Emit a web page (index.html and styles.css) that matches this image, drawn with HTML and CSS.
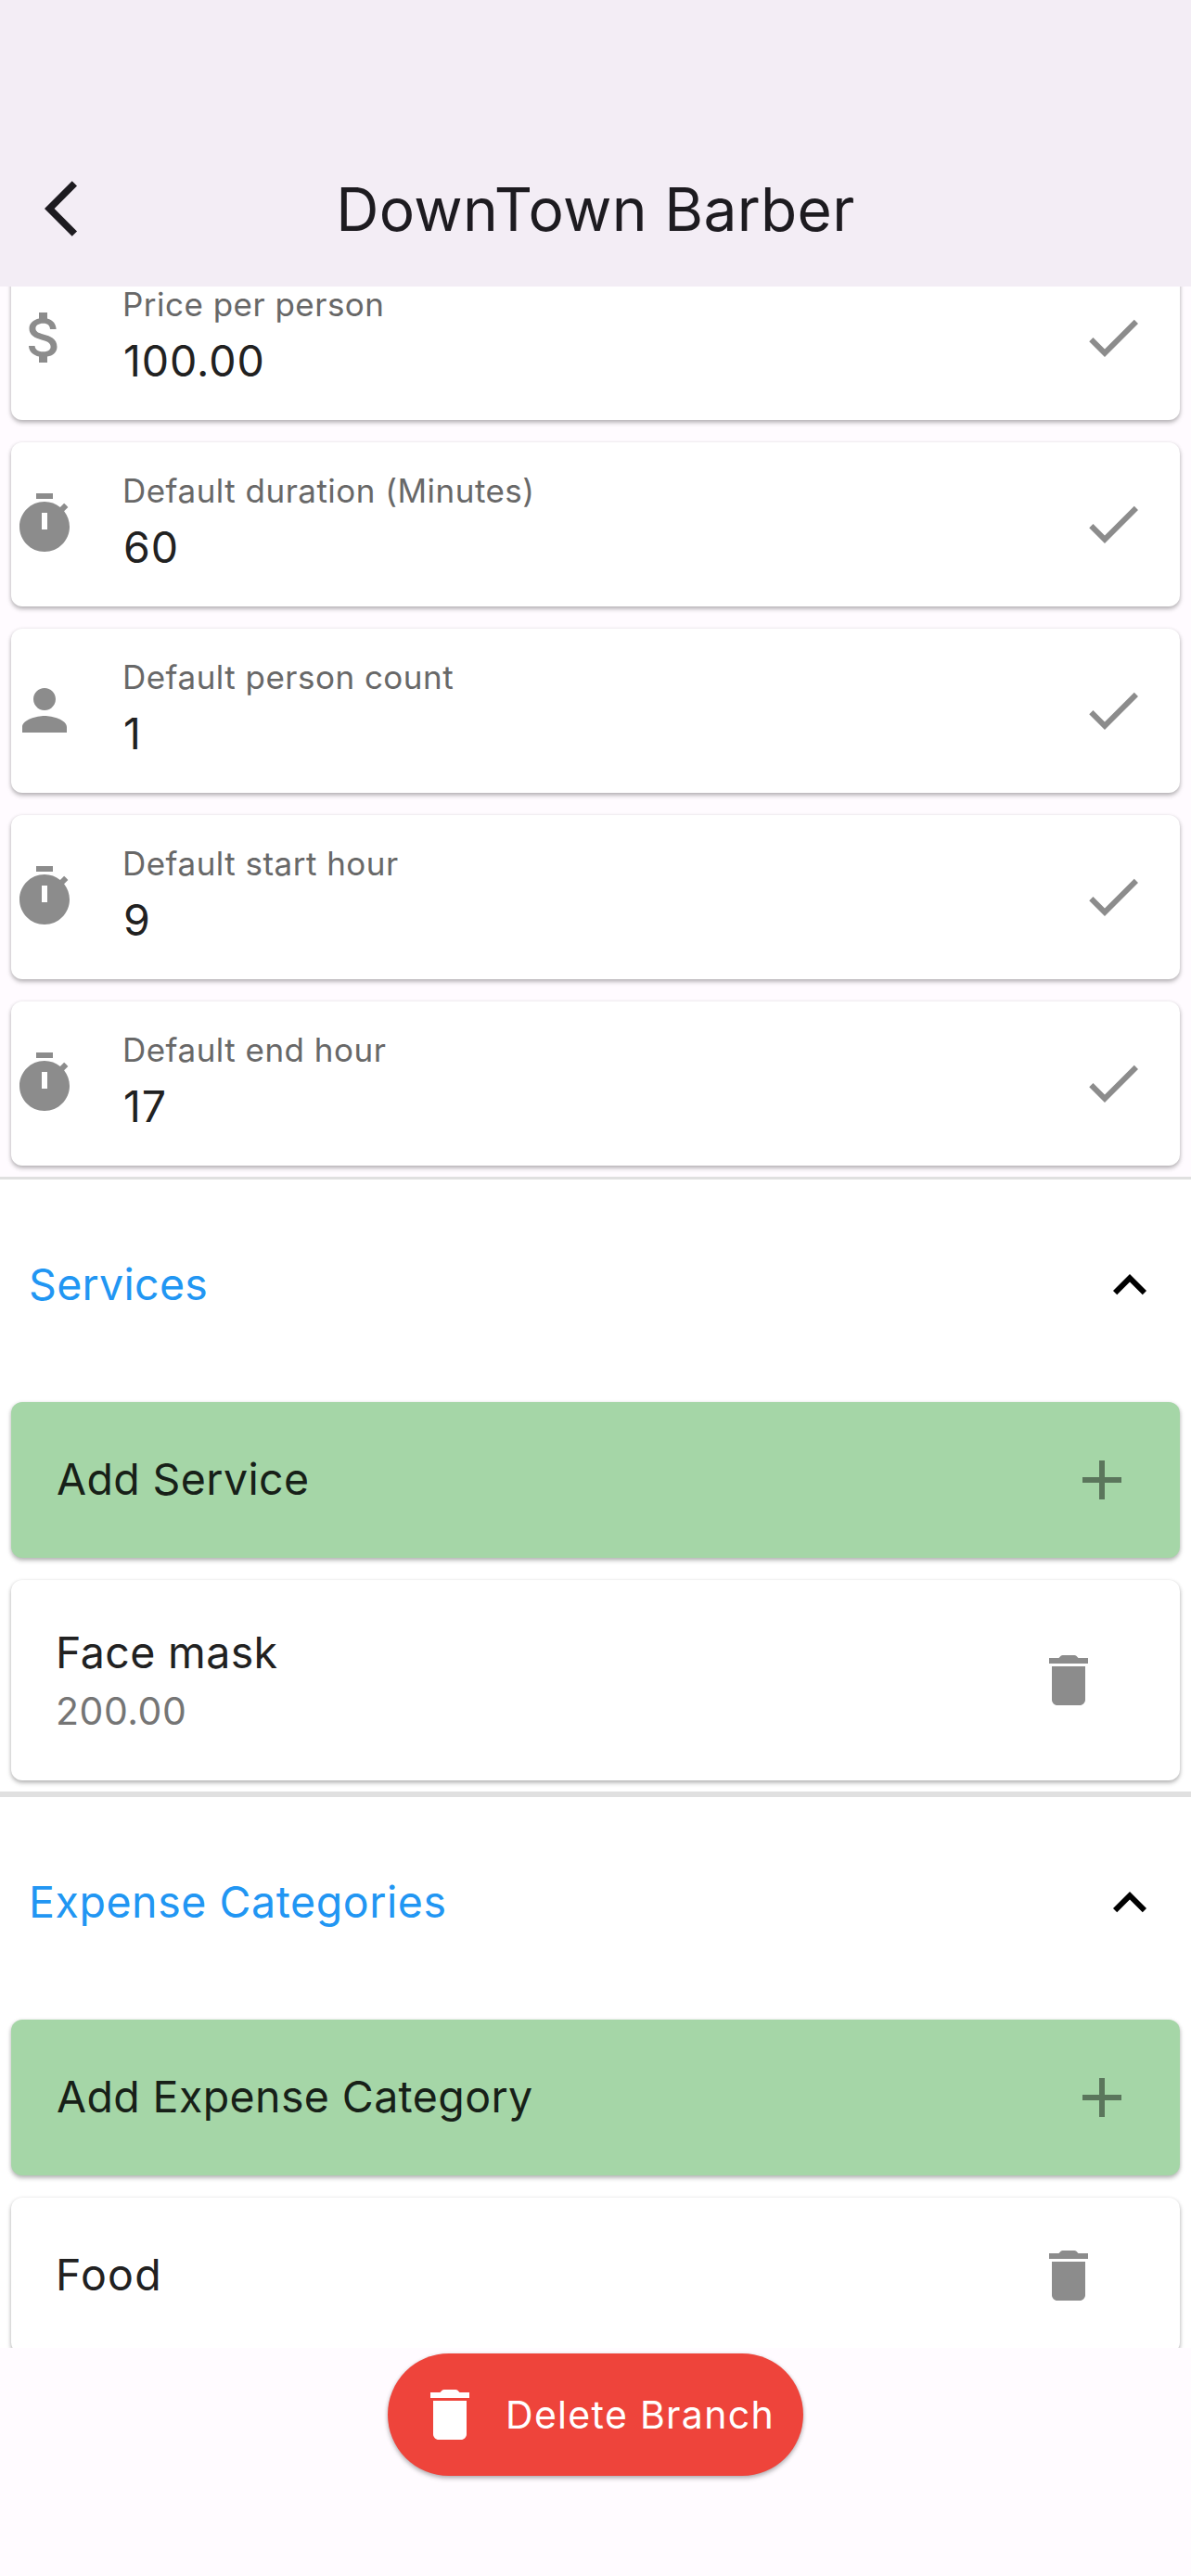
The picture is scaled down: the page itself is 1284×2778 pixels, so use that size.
FILE: index.html
```html
<!DOCTYPE html>
<html lang="en">
<head>
<meta charset="utf-8">
<title>DownTown Barber</title>
<link rel="stylesheet" href="styles.css">
</head>
<body>
<svg class="symbols" aria-hidden="true">
  <symbol id="dollar" viewBox="0 0 24 24"><path d="M11.8 10.9c-2.27-.59-3-1.2-3-2.15 0-1.09 1.01-1.85 2.7-1.85 1.78 0 2.44.85 2.5 2.1h2.21c-.07-1.72-1.12-3.3-3.21-3.81V3h-3v2.16c-1.94.42-3.5 1.68-3.5 3.61 0 2.31 1.91 3.46 4.7 4.13 2.5.6 3 1.48 3 2.41 0 .69-.49 1.79-2.7 1.79-2.06 0-2.87-.92-2.98-2.1h-2.2c.12 2.19 1.76 3.42 3.68 3.83V21h3v-2.15c1.95-.37 3.5-1.5 3.5-3.55 0-2.84-2.43-3.81-4.7-4.4z"/></symbol>
  <symbol id="timer" viewBox="0 0 24 24"><path fill-rule="evenodd" d="M9 1h6v2H9zM19.03 7.39l1.42-1.42c-.43-.51-.9-.99-1.41-1.41l-1.42 1.42C16.07 4.74 14.12 4 12 4c-4.97 0-9 4.03-9 9s4.02 9 9 9 9-4.03 9-9c0-2.12-.74-4.07-1.97-5.61zM13 14h-2V8h2v6z"/></symbol>
  <symbol id="person" viewBox="0 0 24 24"><path d="M12 12c2.21 0 4-1.79 4-4s-1.79-4-4-4-4 1.79-4 4 1.79 4 4 4zm0 2c-2.67 0-8 1.34-8 4v2h16v-2c0-2.66-5.33-4-8-4z"/></symbol>
  <symbol id="check" viewBox="0 0 24 24"><path d="M9 16.17L4.83 12l-1.42 1.41L9 19 21 7l-1.41-1.41z"/></symbol>
  <symbol id="chevron" viewBox="0 0 24 24"><path d="M12 8l-6 6 1.41 1.41L12 10.83l4.59 4.58L18 14z"/></symbol>
  <symbol id="plus" viewBox="0 0 24 24"><path d="M19 13h-6v6h-2v-6H5v-2h6V5h2v6h6v2z"/></symbol>
  <symbol id="trash" viewBox="0 0 24 24"><path d="M6 19c0 1.1.9 2 2 2h8c1.1 0 2-.9 2-2V7H6v12zM19 4h-3.5l-.71-.71c-.18-.18-.44-.29-.7-.29H9.91c-.26 0-.52.11-.7.29L8.5 4H5v2h14V4z"/></symbol>
  <symbol id="back" viewBox="0 0 24 24"><path d="M11.67 3.87L9.9 2.1 0 12l9.9 9.9 1.77-1.77L3.54 12z"/></symbol>
</svg>

<header class="appbar">
  <svg class="icon appbar-back"><use href="#back"/></svg>
  <h1 class="appbar-title">DownTown Barber</h1>
</header>

<main class="scroll">
  <section class="fields">
    <div class="card field">
      <svg class="icon"><use href="#dollar"/></svg>
      <div class="field-text"><span class="field-label">Price per person</span><span class="field-value">100.00</span></div>
      <svg class="icon"><use href="#check"/></svg>
    </div>
    <div class="card field">
      <svg class="icon"><use href="#timer"/></svg>
      <div class="field-text"><span class="field-label">Default duration (Minutes)</span><span class="field-value">60</span></div>
      <svg class="icon"><use href="#check"/></svg>
    </div>
    <div class="card field">
      <svg class="icon"><use href="#person"/></svg>
      <div class="field-text"><span class="field-label">Default person count</span><span class="field-value">1</span></div>
      <svg class="icon"><use href="#check"/></svg>
    </div>
    <div class="card field">
      <svg class="icon"><use href="#timer"/></svg>
      <div class="field-text"><span class="field-label">Default start hour</span><span class="field-value">9</span></div>
      <svg class="icon"><use href="#check"/></svg>
    </div>
    <div class="card field">
      <svg class="icon"><use href="#timer"/></svg>
      <div class="field-text"><span class="field-label">Default end hour</span><span class="field-value">17</span></div>
      <svg class="icon"><use href="#check"/></svg>
    </div>
  </section>

  <section class="panel">
    <div class="panel-head"><h2 class="panel-title">Services</h2><svg class="icon"><use href="#chevron"/></svg></div>
    <div class="panel-body">
      <div class="card add"><span class="item-title">Add Service</span><svg class="icon"><use href="#plus"/></svg></div>
      <div class="card item item-tall">
        <div class="item-text"><span class="item-title">Face mask</span><span class="item-sub">200.00</span></div>
        <svg class="icon"><use href="#trash"/></svg>
      </div>
    </div>
  </section>

  <section class="panel panel-next">
    <div class="panel-head"><h2 class="panel-title panel-title-wide">Expense Categories</h2><svg class="icon"><use href="#chevron"/></svg></div>
    <div class="panel-body">
      <div class="card add"><span class="item-title">Add Expense Category</span><svg class="icon"><use href="#plus"/></svg></div>
      <div class="card item"><span class="item-title item-title-wide">Food</span><svg class="icon"><use href="#trash"/></svg></div>
    </div>
  </section>
</main>

<footer class="bottom">
  <button class="delete"><svg class="icon"><use href="#trash"/></svg><span>Delete Branch</span></button>
</footer>
</body>
</html>
```
FILE: styles.css
```css
* {
  box-sizing: border-box;
}

body {
  margin: 0;
  width: 1284px;
  height: 2778px;
  display: flex;
  flex-direction: column;
  overflow: hidden;
  background: #fffbff;
  color: #212121;
  font-family: Inter, "Liberation Sans", sans-serif;
}

.symbols {
  display: none;
}

.icon {
  flex: none;
  display: block;
  width: 72px;
  height: 72px;
  fill: #8c8c8c;
}

/* App bar */
.appbar {
  flex: none;
  height: 309px;
  padding: 141px 48px 0;
  display: grid;
  grid-template-columns: 72px 1fr 72px;
  align-items: center;
  background: #f3edf5;
}

.appbar-back {
  fill: #1d1b20;
}

.appbar-title {
  margin: 0;
  padding-top: 2px;
  text-align: center;
  color: #1d1b20;
  font-size: 64px;
  font-weight: 400;
  line-height: 84px;
  letter-spacing: 0.33px;
}

/* Scrolling list, resting partway through the first card */
.scroll {
  flex: none;
  height: 2223px;
  overflow: hidden;
}

.fields {
  margin-top: -33px;
  padding: 0 12px 12px;
  display: flex;
  flex-direction: column;
  gap: 24px;
}

.card {
  display: flex;
  align-items: center;
  border-radius: 12px;
  background: #fff;
  box-shadow: 0 3px 5px rgba(0, 0, 0, 0.22), 0 1px 4px rgba(0, 0, 0, 0.14);
}

.field {
  height: 177px;
  padding: 0 36px 1px 0;
}

.field-text {
  flex: 1;
  align-self: flex-start;
  padding: 33px 0 0 48px;
  display: flex;
  flex-direction: column;
  gap: 7px;
}

.field-label {
  color: #686868;
  font-size: 35px;
  line-height: 38px;
  letter-spacing: 0.48px;
}

.field-value {
  padding-left: 1px;
  font-size: 46.5px;
  line-height: 70px;
  letter-spacing: 0.9px;
}

/* Expandable panels */
.panel {
  border-top: 3px solid #e0e0e0;
  background: #fff;
}

.panel-next {
  border-top-width: 6px;
}

.panel-head {
  height: 228px;
  padding: 0 30px;
  display: flex;
  align-items: center;
  justify-content: space-between;
}

.panel-head .icon {
  fill: #000;
}

.panel-title {
  margin: 0;
  padding: 0 0 3px 1px;
  color: #2196f3;
  font-size: 46.5px;
  font-weight: 400;
  line-height: 66px;
  letter-spacing: 0.3px;
}

.panel-title-wide {
  letter-spacing: 0.55px;
}

.panel-body {
  padding: 12px;
  display: flex;
  flex-direction: column;
  gap: 24px;
}

.add {
  height: 168px;
  padding: 0 48px 0 49px;
  justify-content: space-between;
  background: #a5d6a7;
}

.add .item-title {
  padding-bottom: 3px;
  color: #172018;
}

.add .icon {
  fill: #5b765c;
}

.item {
  height: 168px;
  padding: 0 84px 0 48px;
  justify-content: space-between;
}

.item-tall {
  height: 216px;
}

.item-text {
  padding-top: 3px;
  display: flex;
  flex-direction: column;
}

.item-title {
  padding-bottom: 2px;
  font-size: 46.5px;
  line-height: 60px;
  letter-spacing: 0.38px;
}

.item-title-wide {
  letter-spacing: 1.3px;
}

.item-sub {
  color: #757575;
  font-size: 41px;
  line-height: 62px;
  letter-spacing: 0.53px;
}

/* Delete action */
.bottom {
  padding-top: 6px;
  display: flex;
  justify-content: center;
}

.delete {
  width: 448px;
  height: 132px;
  padding: 0 0 0 31px;
  display: flex;
  align-items: center;
  gap: 24px;
  border: 0;
  border-radius: 66px;
  background: #ee443b;
  box-shadow: 0 3px 5px rgba(0, 0, 0, 0.22), 0 1px 4px rgba(0, 0, 0, 0.14);
  color: #fff;
  font: 400 41px/60px Inter, "Liberation Sans", sans-serif;
  letter-spacing: 1.31px;
  white-space: nowrap;
}

.delete .icon {
  fill: #fff;
}
```
